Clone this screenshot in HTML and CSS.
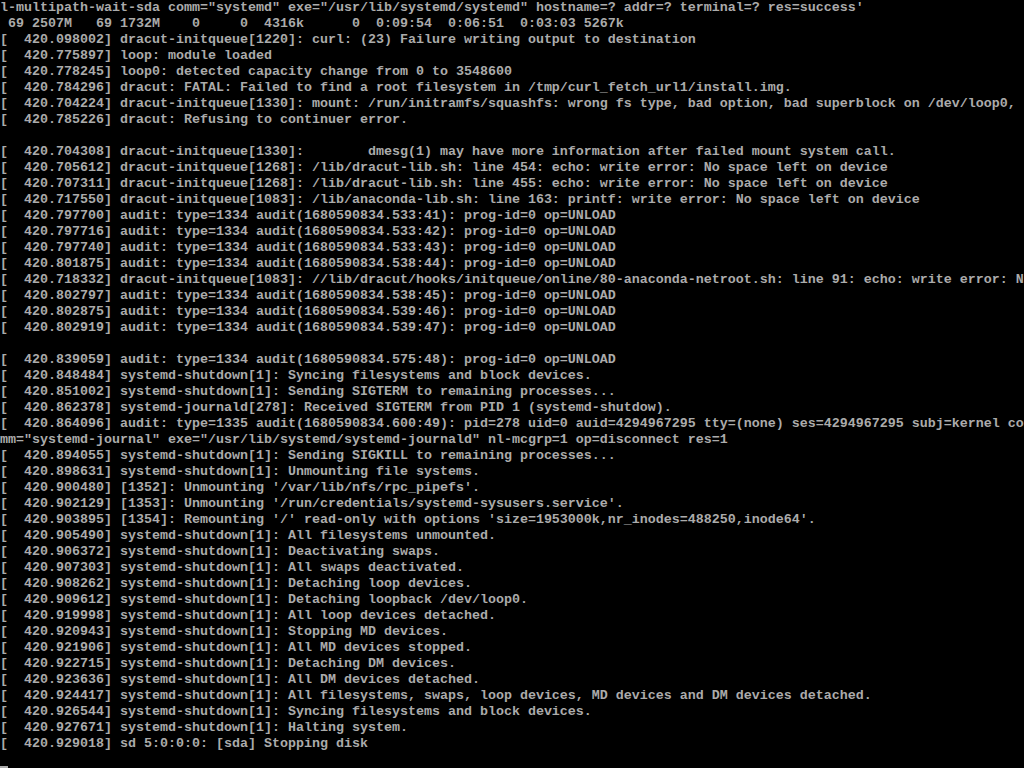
FILE: index.html
```html
<!DOCTYPE html>
<html>
<head>
<meta charset="utf-8">
<title>Console</title>
<link rel="stylesheet" href="styles.css">
</head>
<body>
<main class="console">
<div class="ln">l-multipath-wait-sda comm="systemd" exe="/usr/lib/systemd/systemd" hostname=? addr=? terminal=? res=success'</div>
<div class="ln"> 69 2507M   69 1732M    0     0  4316k      0  0:09:54  0:06:51  0:03:03 5267k</div>
<div class="ln">[  420.098002] dracut-initqueue[1220]: curl: (23) Failure writing output to destination</div>
<div class="ln">[  420.775897] loop: module loaded</div>
<div class="ln">[  420.778245] loop0: detected capacity change from 0 to 3548600</div>
<div class="ln">[  420.784296] dracut: FATAL: Failed to find a root filesystem in /tmp/curl_fetch_url1/install.img.</div>
<div class="ln">[  420.704224] dracut-initqueue[1330]: mount: /run/initramfs/squashfs: wrong fs type, bad option, bad superblock on /dev/loop0,</div>
<div class="ln">[  420.785226] dracut: Refusing to continuer error.</div>
<div class="ln"></div>
<div class="ln">[  420.704308] dracut-initqueue[1330]:        dmesg(1) may have more information after failed mount system call.</div>
<div class="ln">[  420.705612] dracut-initqueue[1268]: /lib/dracut-lib.sh: line 454: echo: write error: No space left on device</div>
<div class="ln">[  420.707311] dracut-initqueue[1268]: /lib/dracut-lib.sh: line 455: echo: write error: No space left on device</div>
<div class="ln">[  420.717550] dracut-initqueue[1083]: /lib/anaconda-lib.sh: line 163: printf: write error: No space left on device</div>
<div class="ln">[  420.797700] audit: type=1334 audit(1680590834.533:41): prog-id=0 op=UNLOAD</div>
<div class="ln">[  420.797716] audit: type=1334 audit(1680590834.533:42): prog-id=0 op=UNLOAD</div>
<div class="ln">[  420.797740] audit: type=1334 audit(1680590834.533:43): prog-id=0 op=UNLOAD</div>
<div class="ln">[  420.801875] audit: type=1334 audit(1680590834.538:44): prog-id=0 op=UNLOAD</div>
<div class="ln">[  420.718332] dracut-initqueue[1083]: //lib/dracut/hooks/initqueue/online/80-anaconda-netroot.sh: line 91: echo: write error: N</div>
<div class="ln">[  420.802797] audit: type=1334 audit(1680590834.538:45): prog-id=0 op=UNLOAD</div>
<div class="ln">[  420.802875] audit: type=1334 audit(1680590834.539:46): prog-id=0 op=UNLOAD</div>
<div class="ln">[  420.802919] audit: type=1334 audit(1680590834.539:47): prog-id=0 op=UNLOAD</div>
<div class="ln"></div>
<div class="ln">[  420.839059] audit: type=1334 audit(1680590834.575:48): prog-id=0 op=UNLOAD</div>
<div class="ln">[  420.848484] systemd-shutdown[1]: Syncing filesystems and block devices.</div>
<div class="ln">[  420.851002] systemd-shutdown[1]: Sending SIGTERM to remaining processes...</div>
<div class="ln">[  420.862378] systemd-journald[278]: Received SIGTERM from PID 1 (systemd-shutdow).</div>
<div class="ln">[  420.864096] audit: type=1335 audit(1680590834.600:49): pid=278 uid=0 auid=4294967295 tty=(none) ses=4294967295 subj=kernel co</div>
<div class="ln">mm="systemd-journal" exe="/usr/lib/systemd/systemd-journald" nl-mcgrp=1 op=disconnect res=1</div>
<div class="ln">[  420.894055] systemd-shutdown[1]: Sending SIGKILL to remaining processes...</div>
<div class="ln">[  420.898631] systemd-shutdown[1]: Unmounting file systems.</div>
<div class="ln">[  420.900480] [1352]: Unmounting '/var/lib/nfs/rpc_pipefs'.</div>
<div class="ln">[  420.902129] [1353]: Unmounting '/run/credentials/systemd-sysusers.service'.</div>
<div class="ln">[  420.903895] [1354]: Remounting '/' read-only with options 'size=1953000k,nr_inodes=488250,inode64'.</div>
<div class="ln">[  420.905490] systemd-shutdown[1]: All filesystems unmounted.</div>
<div class="ln">[  420.906372] systemd-shutdown[1]: Deactivating swaps.</div>
<div class="ln">[  420.907303] systemd-shutdown[1]: All swaps deactivated.</div>
<div class="ln">[  420.908262] systemd-shutdown[1]: Detaching loop devices.</div>
<div class="ln">[  420.909612] systemd-shutdown[1]: Detaching loopback /dev/loop0.</div>
<div class="ln">[  420.919998] systemd-shutdown[1]: All loop devices detached.</div>
<div class="ln">[  420.920943] systemd-shutdown[1]: Stopping MD devices.</div>
<div class="ln">[  420.921906] systemd-shutdown[1]: All MD devices stopped.</div>
<div class="ln">[  420.922715] systemd-shutdown[1]: Detaching DM devices.</div>
<div class="ln">[  420.923636] systemd-shutdown[1]: All DM devices detached.</div>
<div class="ln">[  420.924417] systemd-shutdown[1]: All filesystems, swaps, loop devices, MD devices and DM devices detached.</div>
<div class="ln">[  420.926544] systemd-shutdown[1]: Syncing filesystems and block devices.</div>
<div class="ln">[  420.927671] systemd-shutdown[1]: Halting system.</div>
<div class="ln">[  420.929018] sd 5:0:0:0: [sda] Stopping disk</div>
<div class="ln"><span class="cursor"></span></div>
</main>
</body>
</html>
```

FILE: styles.css
```css
html, body {
  margin: 0;
  padding: 0;
  background: #000;
}

.console {
  width: 1024px;
  height: 768px;
  overflow: hidden;
  background: #000;
  color: #ababab;
  font-family: "Liberation Mono", "DejaVu Sans Mono", monospace;
  font-size: 13.333px;
  font-weight: bold;
  line-height: 16px;
}

.ln {
  height: 16px;
  white-space: pre;
  overflow: hidden;
}

.cursor {
  display: inline-block;
  width: 8px;
  height: 14px;
  border-bottom: 2px solid #ababab;
  vertical-align: top;
}
```
